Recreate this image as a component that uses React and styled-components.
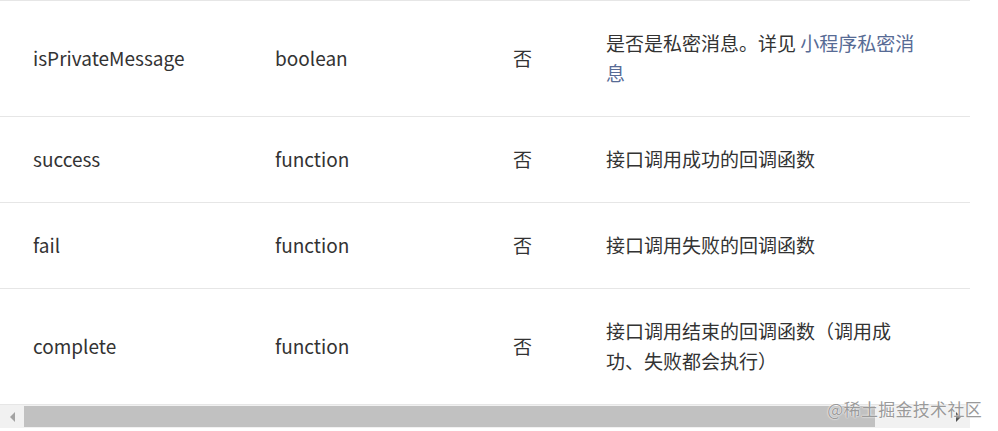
import React from 'react';
import styled, { createGlobalStyle } from 'styled-components';

const GlobalStyle = createGlobalStyle`
	html, body {
		margin: 0;
		padding: 0;
		background: #fff;
	}
	body {
		font-family: 'Noto Sans CJK SC', 'Noto Sans', sans-serif;
		color: #333;
	}
`;

function getRows() {
	return [
		{
			name: 'isPrivateMessage',
			type: 'boolean',
			required: '否',
			desc: (
				<>
					是否是私密消息。详见 <DocLink href='#'>小程序私密消息</DocLink>
				</>
			),
		},
		{ name: 'success', type: 'function', required: '否', desc: '接口调用成功的回调函数' },
		{ name: 'fail', type: 'function', required: '否', desc: '接口调用失败的回调函数' },
		{ name: 'complete', type: 'function', required: '否', desc: '接口调用结束的回调函数（调用成功、失败都会执行）' },
	];
}

export default function App() {
	const rows = getRows();
	const thumbWidth = 851;

	return (
		<>
			<GlobalStyle />
			<Page>
				<TableWrap>
					<ParamTable>
						<colgroup>
							<col style={{ width: 242 }} />
							<col style={{ width: 238 }} />
							<col style={{ width: 93 }} />
							<col style={{ width: 397 }} />
						</colgroup>
						<tbody>
							{rows.map(row => (
								<Row key={row.name}>
									<Cell>{row.name}</Cell>
									<Cell>{row.type}</Cell>
									<Cell>{row.required}</Cell>
									<Cell $wide>{row.desc}</Cell>
								</Row>
							))}
						</tbody>
					</ParamTable>
					<ScrollBar>
						<ArrowButton $dir='left' />
						<Track>
							<Thumb style={{ width: thumbWidth }} />
						</Track>
						<ArrowButton $dir='right' $active />
					</ScrollBar>
				</TableWrap>
				<Watermark>@稀土掘金技术社区</Watermark>
			</Page>
		</>
	);
}

const Page = styled.div`
	position: relative;
	width: 998px;
	height: 431px;
	overflow: hidden;
`;

const TableWrap = styled.div`
	width: 970px;
`;

const ParamTable = styled.table`
	width: 970px;
	table-layout: fixed;
	border-collapse: collapse;
	font-size: 19px;
	line-height: 30px;
`;

const Row = styled.tr`
	border-top: 1px solid #e6e6e6;
	border-bottom: 1px solid #e6e6e6;
`;

const Cell = styled.td`
	padding: 27px ${props => (props.$wide ? '48px' : '0')} 28px 33px;
	vertical-align: middle;
	text-align: left;
	color: #333;
	word-break: normal;
	line-break: strict;
`;

const DocLink = styled.a`
	color: #576b95;
	text-decoration: none;
`;

const ScrollBar = styled.div`
	display: flex;
	height: 23px;
	background: #f1f1f1;
`;

const ArrowButton = styled.div`
	position: relative;
	width: 24px;
	flex: none;
	display: flex;
	align-items: center;
	justify-content: center;

	&::before {
		content: '';
		width: 0;
		height: 0;
		border-top: 5px solid transparent;
		border-bottom: 5px solid transparent;
		${props =>
			props.$dir === 'left'
				? `border-right: 5px solid ${props.$active ? '#505050' : '#a3a3a3'};`
				: `border-left: 5px solid ${props.$active ? '#505050' : '#a3a3a3'};`}
	}
`;

const Track = styled.div`
	flex: 1;
	display: flex;
	padding: 1px 0;
`;

const Thumb = styled.div`
	background: #c1c1c1;
	height: 100%;
`;

const Watermark = styled.div`
	position: absolute;
	right: 16px;
	bottom: 11px;
	font-size: 17px;
	line-height: 22px;
	color: #9a9a9a;
	text-shadow: 0 0 2px #fff, 0 0 1px #fff;
	letter-spacing: 0.3px;
`;
